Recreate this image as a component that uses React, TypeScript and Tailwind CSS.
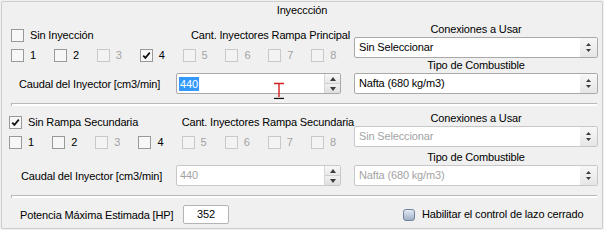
import type { ReactNode } from "react";

const txt = "whitespace-nowrap text-[11px] leading-[13px] text-black";
const dim = "whitespace-nowrap text-[11px] leading-[13px] text-[#a3a3a3]";

function Box({ checked, disabled }: { checked?: boolean; disabled?: boolean }) {
  return (
    <span
      className={
        "relative flex h-[13px] w-[13px] shrink-0 items-center justify-center border " +
        (disabled ? "border-[#c9c9c9] bg-[#f3f3f3]" : "border-[#999999] bg-[#f7f7f7]")
      }
    >
      {checked && (
        <svg width="9" height="9" viewBox="0 0 9 9">
          <path d="M1.2 4.6 L3.4 6.9 L7.8 1.6" fill="none" stroke="#111" strokeWidth="1.7" />
        </svg>
      )}
    </span>
  );
}

function Check({
  label,
  checked,
  disabled,
}: {
  label: string;
  checked?: boolean;
  disabled?: boolean;
}) {
  return (
    <div className="flex items-center gap-[6px] leading-[13px]">
      <Box checked={checked} disabled={disabled} />
      <span className={disabled ? dim : txt}>{label}</span>
    </div>
  );
}

function Arrows() {
  return (
    <svg width="7" height="11" viewBox="0 0 7 11">
      <path d="M3.5 1 L6 4 L1 4 Z" fill="#3c3c3c" />
      <path d="M1 7 L6 7 L3.5 10 Z" fill="#3c3c3c" />
    </svg>
  );
}

function Combo({ value, disabled }: { value: string; disabled?: boolean }) {
  return (
    <div
      className={
        "flex h-[21px] w-[244px] items-center rounded-[2px] border bg-white " +
        (disabled ? "border-[#c8c8c8]" : "border-[#a9a9a9]")
      }
    >
      <span className={"flex-1 pl-[4px] " + (disabled ? dim : txt)}>{value}</span>
      <div className="flex h-full w-[17px] items-center justify-center bg-gradient-to-b from-[#f7f7f7] to-[#e6e6e6]">
        <Arrows />
      </div>
    </div>
  );
}

function Spin({ disabled, children }: { disabled?: boolean; children: ReactNode }) {
  return (
    <div
      className={
        "flex h-[21px] w-[165px] items-center rounded-[2px] border bg-white leading-[13px] " +
        (disabled ? "border-[#c8c8c8]" : "border-[#a9a9a9]")
      }
    >
      <div className="flex flex-1 pl-[2px]">{children}</div>
      <div className="flex h-full w-[16px] flex-col border-l border-[#d6d6d6]">
        <div className="flex flex-1 items-center justify-center border-b border-[#d0d0d0] bg-gradient-to-b from-[#f8f8f8] to-[#e8e8e8]">
          <svg width="6" height="4" viewBox="0 0 6 4">
            <path d="M3 0 L6 4 L0 4 Z" fill="#3c3c3c" />
          </svg>
        </div>
        <div className="flex flex-1 items-center justify-center bg-gradient-to-b from-[#f1f1f1] to-[#dedede]">
          <svg width="6" height="4" viewBox="0 0 6 4">
            <path d="M0 0 L6 0 L3 4 Z" fill="#3c3c3c" />
          </svg>
        </div>
      </div>
    </div>
  );
}

function Separator() {
  return <div className="ml-[10px] h-[3px] w-[586px] border-l border-t border-[#b8b8b8] bg-white" />;
}

function RightCol({ first, top, tipoH }: { first?: boolean; top: string; tipoH: string }) {
  return (
    <div className="flex w-[244px] flex-col">
      <div className={"flex items-end justify-center pb-[1px] " + top}>
        <span className={txt}>Conexiones a Usar</span>
      </div>
      <Combo value="Sin Seleccionar" disabled={!first} />
      <div className={"flex items-end justify-center pb-[1px] " + tipoH}>
        <span className={txt}>Tipo de Combustible</span>
      </div>
      <Combo value="Nafta (680 kg/m3)" disabled={!first} />
    </div>
  );
}

export default function App() {
  const principal = [
    { n: "1" },
    { n: "2" },
    { n: "3", d: true },
    { n: "4", c: true },
    { n: "5", d: true },
    { n: "6", d: true },
    { n: "7", d: true },
    { n: "8", d: true },
  ];
  const secundaria = [
    { n: "1" },
    { n: "2" },
    { n: "3", d: true },
    { n: "4" },
    { n: "5", d: true },
    { n: "6", d: true },
    { n: "7", d: true },
    { n: "8", d: true },
  ];

  return (
    <div className="relative h-[230px] w-[604px] bg-[#f0f0f0] font-['Liberation_Sans',Arial,sans-serif] leading-[13px] tracking-[-0.15px]">
      <div className="absolute inset-[1px] rounded-[2px] border border-[#cdcdcd]" />
      <div className="relative flex flex-col px-[1px] pt-[1px]">
        {/* title */}
        <div className="flex h-[17px] justify-center pt-[3px]">
          <span className={txt}>Inyeccción</span>
        </div>

        {/* rampa principal */}
        <div className="flex">
          <div className="flex w-[353px] flex-col">
            <div className="mt-[11px] flex h-[13px] items-center pl-[10px]">
              <div className="w-[180px]">
                <Check label="Sin Inyección" />
              </div>
              <span className={txt}>Cant. Inyectores Rampa Principal</span>
            </div>
            <div className="mt-[7px] flex h-[13px] items-center pl-[10px]">
              {principal.map((p) => (
                <div key={p.n} className="w-[43.5px]">
                  <Check label={p.n} checked={p.c} disabled={p.d} />
                </div>
              ))}
            </div>
            <div className="mt-[11px] flex items-center">
              <div className="w-[175px] pl-[18px]">
                <span className={txt}>Caudal del Inyector [cm3/min]</span>
              </div>
              <Spin>
                <span className="bg-[#3399ff] px-[1px] text-[11px] leading-[14px] text-white">440</span>
              </Spin>
            </div>
          </div>
          <RightCol first top="h-[19px]" tipoH="h-[15px]" />
        </div>

        <div className="mt-[9px]">
          <Separator />
        </div>

        {/* rampa secundaria */}
        <div className="flex">
          <div className="flex w-[353px] flex-col">
            <div className="mt-[10px] flex h-[13px] items-center pl-[8px]">
              <div className="w-[174px]">
                <Check label="Sin Rampa Secundaria" checked />
              </div>
              <span className={txt}>Cant. Inyectores Rampa Secundaria</span>
            </div>
            <div className="mt-[7px] flex h-[13px] items-center pl-[8px]">
              {secundaria.map((p) => (
                <div key={p.n} className="w-[43.5px]">
                  <Check label={p.n} disabled={p.d} />
                </div>
              ))}
            </div>
            <div className="mt-[16px] flex items-center">
              <div className="w-[175px] pl-[20px]">
                <span className={txt}>Caudal del Inyector [cm3/min]</span>
              </div>
              <Spin disabled>
                <span className={"pl-[1px] " + dim}>440</span>
              </Spin>
            </div>
          </div>
          <RightCol top="h-[20px]" tipoH="h-[18px]" />
        </div>

        <div className="mt-[9px]">
          <Separator />
        </div>

        {/* potencia */}
        <div className="mt-[7px] flex h-[19px] items-center">
          <div className="w-[182px] pl-[19px]">
            <span className={txt}>Potencia Máxima Estimada [HP]</span>
          </div>
          <div className="flex h-[19px] w-[46px] items-center justify-center rounded-[2px] border border-[#b4b4b4] bg-white">
            <span className={txt}>352</span>
          </div>
          <div className="ml-[174px] flex items-center gap-[7px]">
            <span className="h-[12px] w-[12px] rounded-[3px] border border-[#71839c] bg-gradient-to-b from-[#e4ebf4] to-[#9fb0c6]" />
            <span className={txt}>Habilitar el control de lazo cerrado</span>
          </div>
        </div>
      </div>

      {/* mouse I-beam cursor over the spin box */}
      <svg className="absolute left-[273px] top-[82px]" width="12" height="19" viewBox="0 0 12 19">
        <path d="M1 1.5 H11 M6 1.5 V15" stroke="#d42020" strokeWidth="1.4" fill="none" />
        <path d="M1 16.5 H11" stroke="#111" strokeWidth="1.4" />
        <path d="M1 18 H11" stroke="#ffffff" strokeWidth="1" />
      </svg>
    </div>
  );
}
